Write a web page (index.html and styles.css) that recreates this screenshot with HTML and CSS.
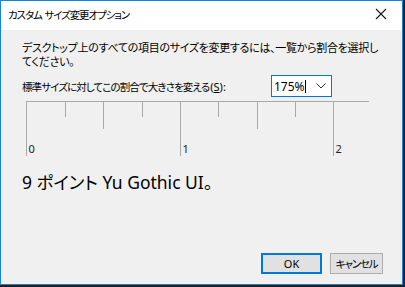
FILE: index.html
```html
<!DOCTYPE html>
<html lang="ja">
<head>
    <meta charset="UTF-8">
    <title>カスタム サイズ変更オプション</title>
    <link rel="stylesheet" href="styles.css">
</head>
<body>

    <div class="window">

        <!-- Title bar -->
        <div class="titlebar">
            <span class="title">カスタム サイズ変更オプション</span>
            <svg class="close" width="12" height="12" viewBox="0 0 12 12">
                <path d="M1 1 L11 11 M11 1 L1 11" stroke="#1a1a1a" stroke-width="1.1" fill="none"/>
            </svg>
        </div>

        <!-- Dialog content -->
        <div class="content">
            <p class="desc">デスクトップ上のすべての項目のサイズを変更するには、一覧から割合を選択し<br>てください。</p>

            <div class="scale-row">
                <label for="scale"><span class="jp">標準サイズに対してこの割合で大きさを変える</span>(<u>S</u>):</label>
                <div class="combo" id="scale">
                    <span class="combo-value">175%<span class="caret"></span></span>
                    <svg class="chevron" width="10" height="6" viewBox="0 0 10 6">
                        <path d="M0.5 0.5 L5 5 L9.5 0.5" stroke="#333" stroke-width="1" fill="none"/>
                    </svg>
                </div>
            </div>

            <!-- Ruler -->
            <svg class="ruler" width="352" height="60" viewBox="0 0 352 60">
                <g stroke="#a9a9a9" stroke-width="1">
                    <line x1="5" y1="1.5" x2="348" y2="1.5"/>
                    <line x1="5.5" y1="1" x2="5.5" y2="56"/>
                    <line x1="44.5" y1="2" x2="44.5" y2="17"/>
                    <line x1="82.5" y1="2" x2="82.5" y2="29"/>
                    <line x1="121.5" y1="2" x2="121.5" y2="17"/>
                    <line x1="159.5" y1="2" x2="159.5" y2="56"/>
                    <line x1="197.5" y1="2" x2="197.5" y2="17"/>
                    <line x1="236.5" y1="2" x2="236.5" y2="29"/>
                    <line x1="274.5" y1="2" x2="274.5" y2="17"/>
                    <line x1="312.5" y1="2" x2="312.5" y2="56"/>
                </g>
                <g class="ruler-num">
                    <text x="7.5" y="53">0</text>
                    <text x="161.5" y="53">1</text>
                    <text x="314.5" y="53">2</text>
                </g>
            </svg>

            <p class="sample">9 ポイント Yu Gothic UI。</p>
        </div>

        <!-- Buttons -->
        <div class="footer">
            <button class="btn default">OK</button>
            <button class="btn cancel">キャンセル</button>
        </div>

    </div>

</body>
</html>
```

FILE: styles.css
```css
body {
    margin: 0;
    padding: 0;
    background-color: #202020;
    font-family: "Noto Sans", "Noto Sans CJK JP", sans-serif;
    font-size: 11px;
    color: #000;
}

.window {
    width: 401px;
    height: 283px;
    border: 1px solid #1883d7;
    background-color: #f0f0f0;
    display: flex;
    flex-direction: column;
}

/* Title bar */
.titlebar {
    height: 29px;
    background-color: white;
    display: flex;
    align-items: center;
    justify-content: space-between;
    padding: 0 15px 0 7px;
}

.title {
    font-size: 10.5px;
    font-feature-settings: "palt";
    letter-spacing: -1.1px;
    word-spacing: 1px;
    line-height: 14px;
    margin-top: -2px;
}

.close {
    margin-top: -3px;
}

/* Content */
.content {
    padding: 11px 20px 0 21px;
}

.desc {
    margin: 0;
    line-height: 14px;
    white-space: nowrap;
    letter-spacing: -0.3px;
    font-feature-settings: "palt";
}

.scale-row {
    display: flex;
    align-items: center;
    margin-top: 6px;
    height: 22px;
}

.scale-row label {
    font-feature-settings: "palt";
    width: 249px;
    white-space: nowrap;
}

.scale-row .jp {
    font-size: 10.5px;
    letter-spacing: -0.9px;
    margin-right: 1px;
}

.combo {
    height: 20px;
    width: 52px;
    border: 1px solid #0078d7;
    background-color: white;
    display: flex;
    align-items: center;
    justify-content: space-between;
    padding: 0 5px 0 2px;
    font-size: 12px;
}

.combo-value {
    display: flex;
    align-items: center;
}

.caret {
    display: inline-block;
    width: 1px;
    height: 13px;
    background-color: #000;
}

/* Ruler */
.ruler {
    display: block;
    margin: 3px 0 0 -1px;
}

.ruler-num text {
    font-family: "Noto Sans", sans-serif;
    font-size: 11px;
    fill: #222;
}

.sample {
    margin: 10px 0 0;
    font-size: 17.5px;
    line-height: 24px;
    font-feature-settings: "palt";
}

/* Buttons */
.footer {
    margin-top: auto;
    display: flex;
    justify-content: flex-end;
    gap: 8px;
    padding: 0 19px 10px 0;
}

.btn {
    width: 53px;
    height: 21px;
    background-color: #e1e1e1;
    border: 1px solid #adadad;
    font-family: "Noto Sans", "Noto Sans CJK JP", sans-serif;
    font-size: 11px;
    font-feature-settings: "palt";
    white-space: nowrap;
    padding: 0;
    color: #000;
}

.btn.cancel {
    font-size: 10.5px;
    letter-spacing: -1.2px;
}

.btn.default {
    width: 61px;
    border: 2px solid #0078d7;
}
```
